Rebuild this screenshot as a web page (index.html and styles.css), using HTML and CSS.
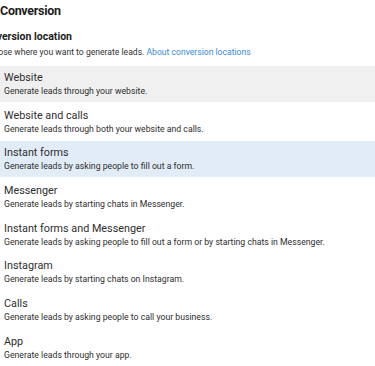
FILE: index.html
```html
<!DOCTYPE html>
<html>
<head>
<meta charset="utf-8">
<link rel="stylesheet" href="styles.css">
</head>
<body>
<div class="panel">
  <h1 class="title">Conversion</h1>
  <div class="section">
    <h2 class="subtitle">Conversion location</h2>
    <p class="intro">Choose where you want to generate leads. <a class="link">About conversion locations</a></p>
  </div>
  <ul class="options">
    <li class="option hover"><div class="opt-title">Website</div><div class="opt-desc">Generate leads through your website.</div></li>
    <li class="option"><div class="opt-title">Website and calls</div><div class="opt-desc">Generate leads through both your website and calls.</div></li>
    <li class="option selected"><div class="opt-title">Instant forms</div><div class="opt-desc">Generate leads by asking people to fill out a form.</div></li>
    <li class="option"><div class="opt-title">Messenger</div><div class="opt-desc">Generate leads by starting chats in Messenger.</div></li>
    <li class="option"><div class="opt-title">Instant forms and Messenger</div><div class="opt-desc">Generate leads by asking people to fill out a form or by starting chats in Messenger.</div></li>
    <li class="option"><div class="opt-title">Instagram</div><div class="opt-desc">Generate leads by starting chats on Instagram.</div></li>
    <li class="option"><div class="opt-title">Calls</div><div class="opt-desc">Generate leads by asking people to call your business.</div></li>
    <li class="option"><div class="opt-title">App</div><div class="opt-desc">Generate leads through your app.</div></li>
  </ul>
</div>
</body>
</html>
```
FILE: styles.css
```css
html, body { margin: 0; padding: 0; background: #fff; }
body { font-family: Roboto, "Liberation Sans", sans-serif; color: #1c1e21; overflow: hidden; width: 375px; height: 366px; }
.panel { display: flex; flex-direction: column; }
.title { margin: 3px 0 0 0; font-size: 12.5px; font-weight: 700; line-height: 16px; letter-spacing: -0.3px; color: #1c1e21; }
.section { margin: 11px 0 0 -17px; }
.subtitle { margin: 0 0 0 -5px; font-size: 10.5px; font-weight: 700; line-height: 14px; color: #1c1e21; }
.intro { margin: 2px 0 0 0; font-size: 8.6px; line-height: 13px; color: #333; }
.link { color: #3b8ad2; }
.options { list-style: none; margin: 7px 0 0 0; padding: 0; display: flex; flex-direction: column; gap: 1.7px; }
.option { height: 36px; padding: 4px 4px; box-sizing: border-box; display: flex; flex-direction: column; justify-content: center; }
.option.hover { background: #f0f0f0; }
.option.selected { background: #e1ecf7; }
.opt-title { font-size: 10.8px; line-height: 14px; color: #2e2e2e; }
.opt-desc { font-size: 8.7px; line-height: 12px; color: #2e2e2e; }
```
